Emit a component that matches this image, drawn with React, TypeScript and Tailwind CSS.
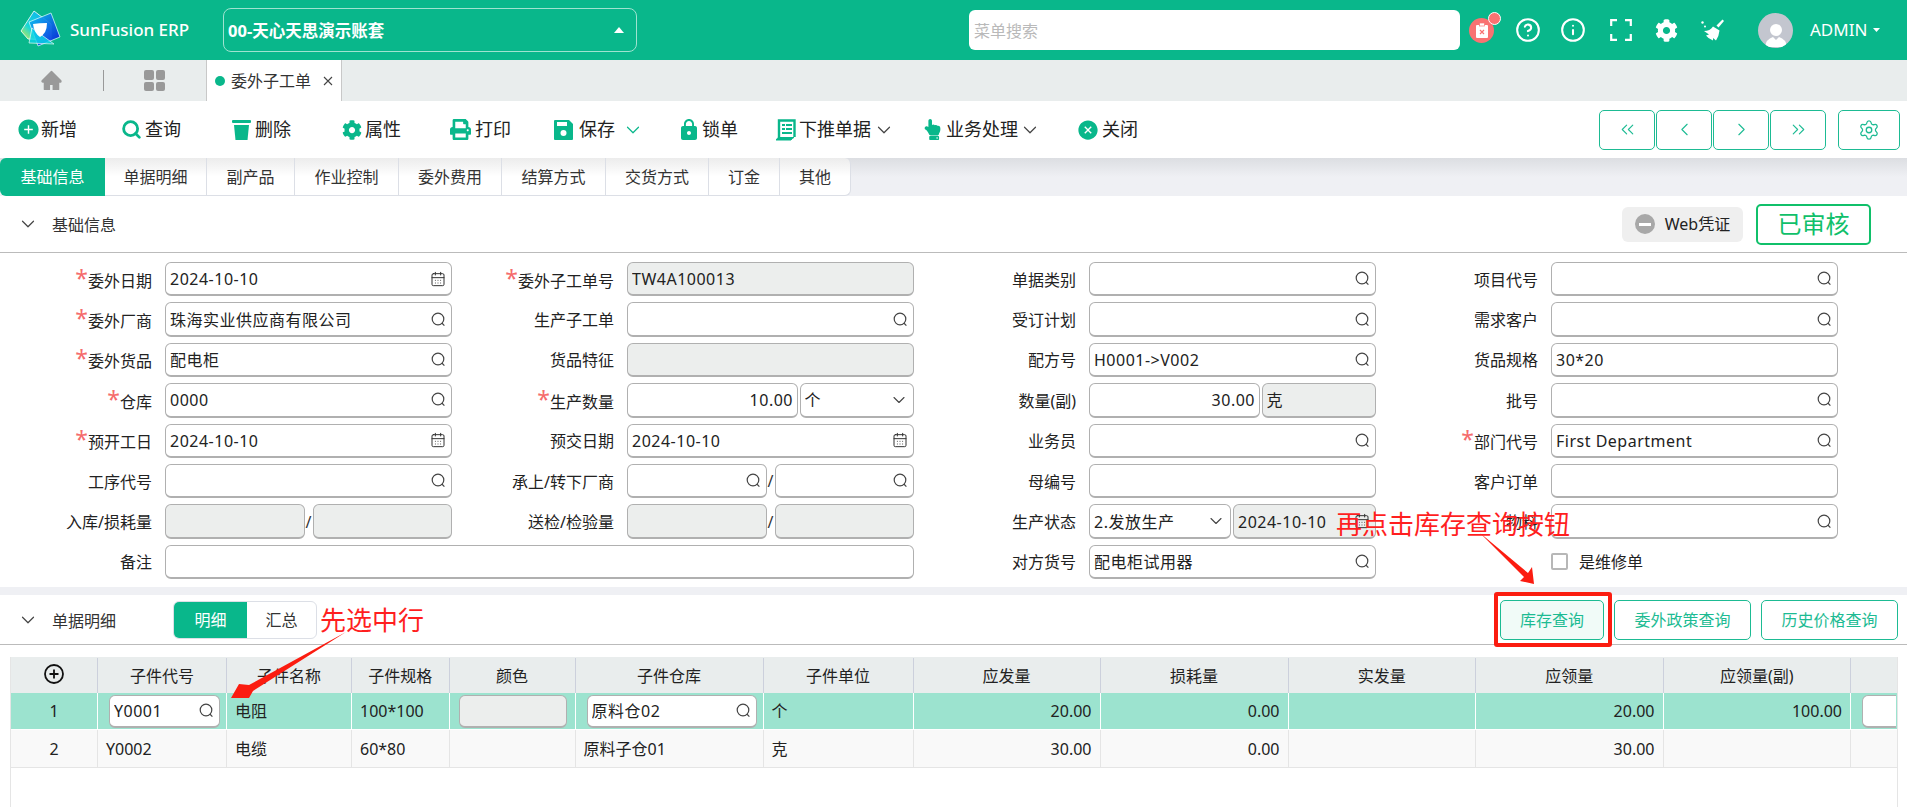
import type { ReactNode } from "react";
import {
  CalendarDays,
  ChevronDown,
  ChevronLeft,
  ChevronRight,
  ChevronsLeft,
  ChevronsRight,
  CircleHelp,
  Info,
  Search,
  Settings,
} from "lucide-react";
import { AiFillCloseCircle, AiFillHome, AiFillPlusCircle } from "react-icons/ai";
import { FaCog, FaHandPointUp, FaPrint } from "react-icons/fa";
import { MdLock } from "react-icons/md";

const green = "text-[#09b78b]";

function Logo() {
  return (
    <svg width="42" height="40" viewBox="0 0 42 40" className="shrink-0">
      <defs>
        <linearGradient id="lg1" x1="0" y1="1" x2="1" y2="0">
          <stop offset="0" stopColor="#e6ee3c" />
          <stop offset="0.35" stopColor="#19d7d6" />
          <stop offset="1" stopColor="#0aa8f5" />
        </linearGradient>
        <linearGradient id="lg2" x1="0" y1="0" x2="1" y2="1">
          <stop offset="0" stopColor="#10c8f0" />
          <stop offset="1" stopColor="#0a10e0" />
        </linearGradient>
      </defs>
      <path d="M14 1 L31 14 L31 30 L8 29 L1 21 Z" fill="url(#lg1)" stroke="#fff" strokeWidth="0.8" strokeLinejoin="round" />
      <path d="M31 3 L40 27 L18 36 L9 12 Z" fill="url(#lg2)" opacity="0.9" stroke="#dff" strokeWidth="0.8" strokeLinejoin="round" />
      <path d="M9 33 L12 18 L34 34 Z" fill="#0bd6e8" opacity="0.8" stroke="#fff" strokeWidth="0.8" strokeLinejoin="round" />
      <path d="M13 14 Q19 13 27 13 Q27 23 20 27 Q14 23 13 14 Z" fill="#fff" />
    </svg>
  );
}

function TrashIcon() {
  return (
    <svg width="19" height="20" viewBox="0 0 19 20" fill="#09b78b">
      <rect x="0" y="0" width="19" height="3" rx="1" />
      <path d="M2 5 H17 L15.5 20 H3.5 Z" />
    </svg>
  );
}

function SaveIcon() {
  return (
    <svg width="19" height="20" viewBox="0 0 19 20">
      <path d="M1 0 H15 L19 4 V19 a1 1 0 0 1 -1 1 H1 a1 1 0 0 1 -1 -1 V1 a1 1 0 0 1 1 -1 Z" fill="#09b78b" />
      <rect x="3" y="2" width="10" height="4" fill="#fff" />
      <circle cx="9.5" cy="13" r="3" fill="#fff" />
    </svg>
  );
}

function PushIcon() {
  return (
    <svg width="20" height="22" viewBox="0 0 20 22" fill="none">
      <path d="M3 19 V1.5 H18.5 V18" stroke="#09b78b" strokeWidth="2.4" />
      <path d="M0 21 H15 Q16 19 18 18.5 H3 Q1 19 0 21 Z" fill="#09b78b" stroke="#09b78b" />
      <rect x="6" y="5" width="3" height="2" fill="#09b78b" />
      <rect x="10" y="5" width="6" height="2" fill="#09b78b" />
      <rect x="6" y="9" width="3" height="2" fill="#09b78b" />
      <rect x="10" y="9" width="6" height="2" fill="#09b78b" />
      <rect x="6" y="13" width="10" height="2" fill="#09b78b" />
    </svg>
  );
}

// the form's lookup icon: big round lens, short tail
function LookupIcon() {
  return (
    <svg width="15" height="15" viewBox="0 0 15 15" fill="none" stroke="#444" strokeWidth="1.2" className="mr-[1px] shrink-0">
      <circle cx="7" cy="7" r="5.8" />
      <path d="M10.8 11 L13.4 13.6" />
    </svg>
  );
}

function FullscreenIcon() {
  return (
    <svg width="22" height="22" viewBox="0 0 22 22" fill="none" stroke="#fff" strokeWidth="2.2" className="ml-[24px] shrink-0">
      <path d="M7 1.2 H1.2 V7 M15 1.2 H20.8 V7 M1.2 15 V20.8 H7 M20.8 15 V20.8 H15" />
    </svg>
  );
}

function BroomIcon() {
  return (
    <svg width="24" height="22" viewBox="0 0 24 22" fill="#fff" className="ml-[23px] shrink-0">
      <path d="M15.5 6.5 L21.5 0.5 L23 2 L17.5 8.5 Z" />
      <path d="M12 7.5 L18.5 11.5 Q18 17 15 21.5 L12 19 L12 21.5 Q7 19.5 5 16.5 L8 15.5 L3 12 Q9 12 12 7.5 Z" />
      <circle cx="1.5" cy="3.5" r="1.2" />
      <circle cx="4" cy="7.5" r="1" />
    </svg>
  );
}

const actions: { label: string; icon: ReactNode; width: string; gap: string; caret?: string }[] = [
  { label: "新增", width: "w-[103px]", gap: "gap-[2px]", icon: <AiFillPlusCircle className={`size-[23px] -mx-[1px] ${green}`} /> },
  { label: "查询", width: "w-[111px]", gap: "gap-[3px]", icon: <Search className={`size-[21px] ${green}`} strokeWidth={3.2} /> },
  { label: "删除", width: "w-[110px]", gap: "gap-[4px]", icon: <TrashIcon /> },
  { label: "属性", width: "w-[108px]", gap: "gap-[3px]", icon: <FaCog className={`size-[20px] ${green}`} /> },
  { label: "打印", width: "w-[104px]", gap: "gap-[4px]", icon: <FaPrint className={`size-[21px] ${green}`} /> },
  { label: "保存", width: "w-[125px]", gap: "gap-[6px]", icon: <SaveIcon />, caret: "text-[#09b78b] ml-[1px]" },
  { label: "锁单", width: "w-[97px]", gap: "gap-[3px]", icon: <MdLock className={`size-[24px] -mx-[2px] ${green}`} /> },
  { label: "下推单据", width: "w-[146px]", gap: "gap-[3px]", icon: <PushIcon />, caret: "text-[#444] -ml-[1px]" },
  { label: "业务处理", width: "w-[155px]", gap: "gap-[3px]", icon: <FaHandPointUp className={`size-[21px] ${green}`} />, caret: "text-[#444] -ml-[2px]" },
  { label: "关闭", width: "w-[90px]", gap: "gap-[3px]", icon: <AiFillCloseCircle className={`size-[22px] ${green}`} /> },
];

const tabs = [
  { label: "基础信息", width: "w-[105px]" },
  { label: "单据明细", width: "w-[102px]" },
  { label: "副产品", width: "w-[88px]" },
  { label: "作业控制", width: "w-[104px]" },
  { label: "委外费用", width: "w-[103px]" },
  { label: "结算方式", width: "w-[104px]" },
  { label: "交货方式", width: "w-[103px]" },
  { label: "订金", width: "w-[71px]" },
  { label: "其他", width: "w-[71px]" },
];

type InputProps = {
  value?: string;
  icon?: "search" | "date" | "select";
  disabled?: boolean;
  right?: boolean;
  width?: string;
};

function Input({ value, icon, disabled, right, width = "flex-1" }: InputProps) {
  return (
    <div
      className={`${width} h-full min-w-0 flex items-center rounded-[6px] border border-b-2 border-[#b0b0b0] px-[4px] text-[16px] text-[#222] ${
        disabled ? "bg-[#eceeed]" : "bg-white"
      }`}
    >
      <span className={`flex-1 truncate pt-[1px] tracking-[0.5px] ${right ? "text-right" : ""}`}>{value}</span>
      {icon === "search" && <LookupIcon />}
      {icon === "date" && <CalendarDays className="size-[16px] shrink-0 mr-[1px] text-[#333]" strokeWidth={1.5} />}
      {icon === "select" && <ChevronDown className="size-[20px] shrink-0 text-[#444]" strokeWidth={1.3} />}
    </div>
  );
}

function Field({ label, required, children, span }: { label?: string; required?: boolean; children: ReactNode; span?: boolean }) {
  return (
    <div className={`flex h-[34.4px] items-center ${span ? "col-span-2" : ""}`}>
      <div className="w-[152px] shrink-0 pt-[1px] text-right text-[16px] text-[#222] whitespace-nowrap">
        {required && <span className="text-[#f56c6c] text-[23px] leading-none">*</span>}
        {label}
      </div>
      <div className={`ml-[13px] ${span ? "w-[749px]" : "w-[287px]"} h-full flex items-center`}>{children}</div>
    </div>
  );
}

function Slash() {
  return <span className="w-[8px] text-center text-[16px] text-[#333]">/</span>;
}

const columns = [
  { name: "", w: "w-[87px]" },
  { name: "子件代号", w: "w-[129px]" },
  { name: "子件名称", w: "w-[125px]" },
  { name: "子件规格", w: "w-[97.5px]" },
  { name: "颜色", w: "w-[126px]" },
  { name: "子件仓库", w: "w-[188px]" },
  { name: "子件单位", w: "w-[150px]" },
  { name: "应发量", w: "w-[187px]" },
  { name: "损耗量", w: "w-[188px]" },
  { name: "实发量", w: "w-[187.5px]" },
  { name: "应领量", w: "w-[187.5px]" },
  { name: "应领量(副)", w: "w-[187.5px]" },
  { name: "", w: "w-[46px]" },
];

function Cell({ w, children, right, center, line }: { w: string; children?: ReactNode; right?: boolean; center?: boolean; line: string }) {
  return (
    <div
      className={`${w} shrink-0 h-full flex items-center border-r ${line} px-[8px] overflow-hidden ${
        right ? "justify-end" : center ? "justify-center" : ""
      }`}
    >
      {children}
    </div>
  );
}

export default function App() {
  return (
    <div className="relative h-screen w-full overflow-hidden bg-white font-['Noto_Sans','Noto_Sans_CJK_SC',sans-serif] text-[16px] text-[#222]">
      {/* top bar */}
      <header className="flex h-[60px] items-center bg-[#09b78b] text-white">
        <div className="ml-[20px]">
          <Logo />
        </div>
        <span className="ml-[8px] w-[153px] text-[17px] font-medium">SunFusion ERP</span>
        <div className="flex h-[44px] w-[414px] items-center justify-between rounded-[8px] border border-[#9fe3d0] pl-[4px] pr-[12px] text-[16.5px] font-bold">
          <span className="pt-[2px]">00-天心天思演示账套</span>
          <svg width="10" height="6" viewBox="0 0 10 6" fill="#fff">
            <path d="M0 6 L5 0 L10 6 Z" />
          </svg>
        </div>
        <div className="ml-[332px] flex h-[40px] w-[491px] items-center rounded-[6px] bg-white pl-[5px] pt-[2px] text-[16px] text-[#b9b9b9]">
          菜单搜索
        </div>
        <div className="relative ml-[9px] flex size-[25px] shrink-0 items-center justify-center rounded-full bg-[#f97272]">
          <svg width="12" height="15" viewBox="0 0 12 15">
            <rect x="0" y="2" width="12" height="13" rx="1" fill="#fff" />
            <rect x="3.5" y="0" width="5" height="3" fill="#fff" stroke="#f97272" strokeWidth="0.7" />
            <path d="M4 7 L8 11 M8 7 L4 11" stroke="#f97272" strokeWidth="1.2" />
          </svg>
          <span className="absolute -right-[7px] -top-[6px] size-[13px] rounded-full border border-white bg-[#f97272]" />
        </div>
        <CircleHelp className="ml-[21px] size-[26px] shrink-0" strokeWidth={1.9} />
        <Info className="ml-[19px] size-[26px] shrink-0" strokeWidth={1.9} />
        <FullscreenIcon />
        <FaCog className="ml-[23px] size-[23px] shrink-0" />
        <BroomIcon />
        <div className="ml-[33px] flex size-[35px] shrink-0 items-end justify-center overflow-hidden rounded-full bg-[#c3c6cf]">
          <svg width="22" height="26" viewBox="0 0 22 26" fill="#fff">
            <circle cx="11" cy="8" r="6" />
            <path d="M0 25 Q1 17 8 15 L11 18 L14 15 Q21 17 22 25 Z" />
          </svg>
        </div>
        <span className="ml-[17px] text-[17px]">ADMIN</span>
        <svg width="7" height="4" viewBox="0 0 7 4" fill="#fff" className="ml-[6px] shrink-0">
          <path d="M0 0 H7 L3.5 4 Z" />
        </svg>
      </header>

      {/* page tabs */}
      <div className="flex h-[41px] items-center bg-[#e9eded]">
        <AiFillHome className="ml-[40px] size-[23px] text-[#999]" />
        <span className="ml-[40px] h-[21px] w-px bg-[#999]" />
        <div className="ml-[40px] grid size-[21px] grid-cols-2 gap-[2px]">
          <span className="rounded-[2px] bg-[#999]" />
          <span className="rounded-[2px] bg-[#999]" />
          <span className="rounded-[2px] bg-[#999]" />
          <span className="rounded-[2px] bg-[#999]" />
        </div>
        <div className="ml-[41px] flex h-full w-[136px] items-center border-x border-[#c8c8c8] bg-white pl-[8px]">
          <span className="size-[10px] rounded-full bg-[#09b78b]" />
          <span className="ml-[6px] text-[16px] text-[#333]">委外子工单</span>
          <svg width="10" height="10" viewBox="0 0 10 10" className="ml-[12px]" stroke="#444" strokeWidth="1.1">
            <path d="M1 1 L9 9 M9 1 L1 9" />
          </svg>
        </div>
      </div>

      {/* toolbar */}
      <div className="flex h-[57px] items-center pl-[18px]">
        {actions.map((a) => (
          <div key={a.label} className={`${a.width} ${a.gap} flex shrink-0 items-center text-[18px] text-[#222]`}>
            {a.icon}
            <span>{a.label}</span>
            {a.caret && <ChevronDown className={`size-[22px] ${a.caret}`} strokeWidth={1.3} />}
          </div>
        ))}
        <div className="ml-[432px] flex gap-px">
          {[ChevronsLeft, ChevronLeft, ChevronRight, ChevronsRight].map((Icon, i) => (
            <div key={i} className="flex h-[40px] w-[56px] items-center justify-center rounded-[5px] border border-[#1dbb93]">
              <Icon className="size-[21px] text-[#1dbb93]" strokeWidth={1.3} />
            </div>
          ))}
        </div>
        <div className="ml-[12px] flex h-[40px] w-[62px] items-center justify-center rounded-[5px] border border-[#1dbb93]">
          <Settings className="size-[22px] text-[#1dbb93]" strokeWidth={1.4} />
        </div>
      </div>

      {/* form tabs */}
      <div className="flex h-[38px] bg-gradient-to-b from-[#dcdee2] via-[#eff0f4] to-[#eff0f4]">
        {tabs.map((t, i) => (
          <div
            key={t.label}
            className={`${t.width} flex shrink-0 items-center justify-center text-[16px] ${
              i === 0
                ? "rounded-l-[6px] bg-[#09b78b] text-white"
                : "border-r border-b border-[#dcdfe6] bg-gradient-to-b from-[#ececec] via-white to-white text-[#333]"
            } ${i === tabs.length - 1 ? "rounded-r-[6px]" : ""}`}
          >
            {t.label}
          </div>
        ))}
      </div>

      {/* base info header */}
      <div className="flex h-[57px] items-center border-b border-[#bbb] pl-[17px]">
        <ChevronDown className="size-[22px] text-[#444]" strokeWidth={1.3} />
        <span className="ml-[13px] pt-[2px] text-[16px] text-[#333]">基础信息</span>
        <div className="ml-auto flex h-[35px] w-[121px] items-center justify-center gap-[10px] rounded-[6px] bg-[#efefef] text-[16px]">
          <span className="flex size-[20px] items-center justify-center rounded-full bg-[#a8a8a8]">
            <span className="h-[3px] w-[12px] bg-white" />
          </span>
          Web凭证
        </div>
        <div className="ml-[13px] mr-[36px] flex h-[41px] w-[115px] items-center justify-center rounded-[5px] border-2 border-[#10c06a] text-[24px] text-[#10c06a]">
          已审核
        </div>
      </div>

      {/* form */}
      <div className="grid h-[334px] grid-cols-[repeat(4,462px)] content-start gap-y-[6px] pt-[9px]">
        <Field label="委外日期" required><Input value="2024-10-10" icon="date" /></Field>
        <Field label="委外子工单号" required><Input value="TW4A100013" disabled /></Field>
        <Field label="单据类别"><Input icon="search" /></Field>
        <Field label="项目代号"><Input icon="search" /></Field>

        <Field label="委外厂商" required><Input value="珠海实业供应商有限公司" icon="search" /></Field>
        <Field label="生产子工单"><Input icon="search" /></Field>
        <Field label="受订计划"><Input icon="search" /></Field>
        <Field label="需求客户"><Input icon="search" /></Field>

        <Field label="委外货品" required><Input value="配电柜" icon="search" /></Field>
        <Field label="货品特征"><Input disabled /></Field>
        <Field label="配方号"><Input value="H0001->V002" icon="search" /></Field>
        <Field label="货品规格"><Input value="30*20" /></Field>

        <Field label="仓库" required><Input value="0000" icon="search" /></Field>
        <Field label="生产数量" required>
          <Input value="10.00" right width="w-[171px]" />
          <span className="w-[1.5px]" />
          <Input value="个" icon="select" />
        </Field>
        <Field label="数量(副)">
          <Input value="30.00" right width="w-[171px]" />
          <span className="w-[1.5px]" />
          <Input value="克" disabled />
        </Field>
        <Field label="批号"><Input icon="search" /></Field>

        <Field label="预开工日" required><Input value="2024-10-10" icon="date" /></Field>
        <Field label="预交日期"><Input value="2024-10-10" icon="date" /></Field>
        <Field label="业务员"><Input icon="search" /></Field>
        <Field label="部门代号" required><Input value="First Department" icon="search" /></Field>

        <Field label="工序代号"><Input icon="search" /></Field>
        <Field label="承上/转下厂商">
          <Input icon="search" />
          <Slash />
          <Input icon="search" />
        </Field>
        <Field label="母编号"><Input /></Field>
        <Field label="客户订单"><Input /></Field>

        <Field label="入库/损耗量">
          <Input disabled />
          <Slash />
          <Input disabled />
        </Field>
        <Field label="送检/检验量">
          <Input disabled />
          <Slash />
          <Input disabled />
        </Field>
        <Field label="生产状态">
          <Input value="2.发放生产" icon="select" width="w-[142px]" />
          <span className="w-[2px]" />
          <Input value="2024-10-10" icon="date" disabled />
        </Field>
        <Field label="物料"><Input icon="search" /></Field>

        <Field label="备注" span><Input /></Field>
        <Field label="对方货号"><Input value="配电柜试用器" icon="search" /></Field>
        <Field>
          <span className="size-[17px] rounded-[2px] border-2 border-[#b7b7b7] bg-white" />
          <span className="ml-[11px] pt-[1px] text-[16px]">是维修单</span>
        </Field>
      </div>

      <div className="h-[8px] bg-[#eff0f4]" />

      {/* detail header */}
      <div className="flex h-[50px] items-center border-b border-[#bbb] pl-[17px]">
        <ChevronDown className="size-[22px] text-[#444]" strokeWidth={1.3} />
        <span className="ml-[13px] pt-[2px] text-[16px] text-[#333]">单据明细</span>
        <div className="ml-[57px] flex h-[38px] overflow-hidden rounded-[6px] border border-[#dcdfe6] text-[16px]">
          <span className="flex w-[73px] items-center justify-center bg-[#09b78b] pt-[1px] text-white">明细</span>
          <span className="flex w-[69px] items-center justify-center pt-[1px] text-[#333]">汇总</span>
        </div>
        <div className="ml-auto mr-[9px] flex gap-[10px] text-[16px] text-[#1dbb93]">
          <span className="flex h-[40px] w-[104px] items-center justify-center rounded-[5px] border border-[#1dbb93] bg-[#f1fbf8] pt-[1px]">库存查询</span>
          <span className="flex h-[40px] w-[137px] items-center justify-center rounded-[5px] border border-[#1dbb93] pt-[1px]">委外政策查询</span>
          <span className="flex h-[40px] w-[137px] items-center justify-center rounded-[5px] border border-[#1dbb93] pt-[1px]">历史价格查询</span>
        </div>
      </div>

      {/* table */}
      <div className="ml-[10px] mr-[9px] mt-[12px] h-[150px] border-x border-[#e5e5e5] text-[16px]">
        <div className="flex h-[36px] bg-[#e9eded] pt-[1px]">
          {columns.map((c, i) => (
            <Cell key={i} w={c.w} center line={i === 12 ? "border-transparent" : "border-[#ccd0dc]"}>
              {i === 0 ? (
                <svg width="20" height="20" viewBox="0 0 20 20" fill="none" stroke="#111" className="-mt-[4px]">
                  <circle cx="10" cy="10" r="9" strokeWidth="1.8" />
                  <path d="M10 5.5 V14.5 M5.5 10 H14.5" strokeWidth="1.8" />
                </svg>
              ) : (
                c.name
              )}
            </Cell>
          ))}
        </div>
        <div className="flex h-[37px] bg-[#9ce3cf] border-b border-white">
          <Cell w={columns[0].w} center line="border-white">1</Cell>
          <Cell w={columns[1].w} line="border-white">
            <div className="ml-[3px] flex h-[33px] w-[111px] shrink-0 items-center"><Input value="Y0001" icon="search" /></div>
          </Cell>
          <Cell w={columns[2].w} line="border-white">电阻</Cell>
          <Cell w={columns[3].w} line="border-white">100*100</Cell>
          <Cell w={columns[4].w} center line="border-white">
            <div className="ml-[2px] flex h-[33px] w-[108px] shrink-0"><Input disabled /></div>
          </Cell>
          <Cell w={columns[5].w} line="border-white">
            <div className="ml-[3px] flex h-[33px] w-[170px] shrink-0"><Input value="原料仓02" icon="search" /></div>
          </Cell>
          <Cell w={columns[6].w} line="border-white">个</Cell>
          <Cell w={columns[7].w} right line="border-white">20.00</Cell>
          <Cell w={columns[8].w} right line="border-white">0.00</Cell>
          <Cell w={columns[9].w} line="border-white" />
          <Cell w={columns[10].w} right line="border-white">20.00</Cell>
          <Cell w={columns[11].w} right line="border-white">100.00</Cell>
          <Cell w={columns[12].w} line="border-transparent">
            <div className="ml-[3px] flex h-[33px] w-[60px] shrink-0"><Input /></div>
          </Cell>
        </div>
        <div className="flex h-[38px] border-b border-[#e5e5e5] bg-[#f9f9f9]">
          <Cell w={columns[0].w} center line="border-[#e5e5e5]">2</Cell>
          <Cell w={columns[1].w} line="border-[#e5e5e5]">Y0002</Cell>
          <Cell w={columns[2].w} line="border-[#e5e5e5]">电缆</Cell>
          <Cell w={columns[3].w} line="border-[#e5e5e5]">60*80</Cell>
          <Cell w={columns[4].w} line="border-[#e5e5e5]" />
          <Cell w={columns[5].w} line="border-[#e5e5e5]">原料子仓01</Cell>
          <Cell w={columns[6].w} line="border-[#e5e5e5]">克</Cell>
          <Cell w={columns[7].w} right line="border-[#e5e5e5]">30.00</Cell>
          <Cell w={columns[8].w} right line="border-[#e5e5e5]">0.00</Cell>
          <Cell w={columns[9].w} line="border-[#e5e5e5]" />
          <Cell w={columns[10].w} right line="border-[#e5e5e5]">30.00</Cell>
          <Cell w={columns[11].w} line="border-[#e5e5e5]" />
          <Cell w={columns[12].w} line="border-transparent" />
        </div>
      </div>

      {/* annotations over the page */}
      <span className="absolute left-[1336px] top-[506px] text-[26px] leading-[36px] text-[#ff1f1f]">再点击库存查询按钮</span>
      <span className="absolute left-[320px] top-[602px] text-[26px] leading-[36px] text-[#ff1f1f]">先选中行</span>
      <div className="absolute left-[1494px] top-[592px] h-[55px] w-[118px] rounded-[3px] border-[4px] border-[#fb1c10]" />
      <svg className="pointer-events-none absolute left-0 top-0" width="1907" height="807" fill="#fb1c10">
        <polygon points="346,632 253,691 249,698 231,698 239,684 249,685" />
        <polygon points="1480,533 1524,577 1520,581 1534,584 1532,567 1528,573" />
      </svg>
    </div>
  );
}
